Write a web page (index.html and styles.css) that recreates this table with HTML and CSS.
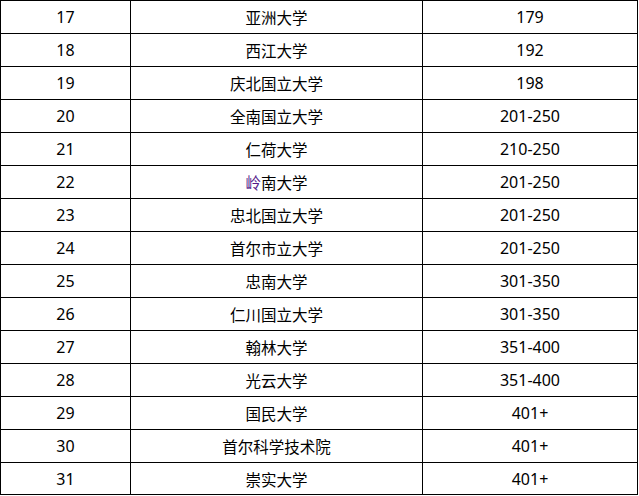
FILE: index.html
```html
<!DOCTYPE html>
<html lang="zh">
<head>
<meta charset="utf-8">
<link rel="stylesheet" href="styles.css">
</head>
<body>
<table class="rank">
  <colgroup><col class="c1"><col class="c2"><col class="c3"></colgroup>
  <tbody>
    <tr><td>17</td><td class="name">亚洲大学</td><td>179</td></tr>
    <tr><td>18</td><td class="name">西江大学</td><td>192</td></tr>
    <tr><td>19</td><td class="name">庆北国立大学</td><td>198</td></tr>
    <tr><td>20</td><td class="name">全南国立大学</td><td>201-250</td></tr>
    <tr><td>21</td><td class="name">仁荷大学</td><td>210-250</td></tr>
    <tr><td>22</td><td class="name"><span class="visited">岭</span>南大学</td><td>201-250</td></tr>
    <tr><td>23</td><td class="name">忠北国立大学</td><td>201-250</td></tr>
    <tr><td>24</td><td class="name">首尔市立大学</td><td>201-250</td></tr>
    <tr><td>25</td><td class="name">忠南大学</td><td>301-350</td></tr>
    <tr><td>26</td><td class="name">仁川国立大学</td><td>301-350</td></tr>
    <tr><td>27</td><td class="name">翰林大学</td><td>351-400</td></tr>
    <tr><td>28</td><td class="name">光云大学</td><td>351-400</td></tr>
    <tr><td>29</td><td class="name">国民大学</td><td>401+</td></tr>
    <tr><td>30</td><td class="name">首尔科学技术院</td><td>401+</td></tr>
    <tr><td>31</td><td class="name">崇实大学</td><td>401+</td></tr>
  </tbody>
</table>
</body>
</html>
```
FILE: styles.css
```css
html, body {
  margin: 0;
  padding: 0;
  background: #ffffff;
}
.rank {
  border-collapse: separate;
  border-spacing: 0;
  table-layout: fixed;
  width: 638px;
  border-left: 1px solid #000;
  border-top: 1px solid #000;
  font-family: "Noto Sans", "Noto Sans CJK SC", sans-serif;
  font-size: 16px;
  color: #000;
}
.c1 { width: 130px; }
.c2 { width: 292px; }
.c3 { width: 215px; }
.rank td {
  box-sizing: border-box;
  height: 33px;
  padding: 0;
  border-right: 1px solid #000;
  border-bottom: 1px solid #000;
  text-align: center;
  vertical-align: middle;
  line-height: 20px;
}
.rank td.name {
  font-family: "Noto Sans CJK SC", sans-serif;
  font-size: 15.5px;
}
.rank tr:last-child td {
  height: 32px;
}
.visited {
  color: #551a8b;
}
```
